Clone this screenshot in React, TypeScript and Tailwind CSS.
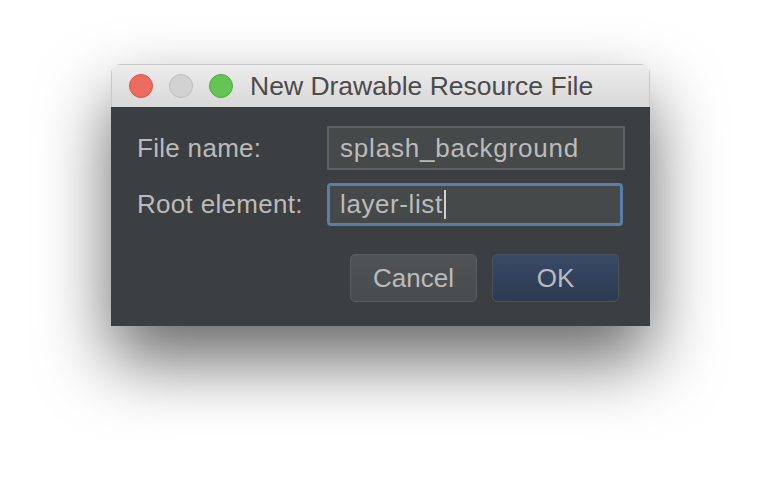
export default function App() {
  return (
    <div className="flex h-[486px] w-[762px] items-start bg-white pl-[111px] pt-[64px] font-['Liberation_Sans',Arial,sans-serif]">
      <div className="w-[539px] overflow-hidden rounded-t-[9px] shadow-[0_34px_70px_rgba(0,0,0,0.6)]">
        <div className="flex h-[43px] items-center gap-[16px] border border-b-0 border-[#c8c8c8] bg-gradient-to-b from-[#ececec] to-[#d8d8d8] pl-[17px]">
          <span className="h-[24px] w-[24px] shrink-0 rounded-full border border-[#d3584f] bg-[#ed6b5f]" />
          <span className="h-[24px] w-[24px] shrink-0 rounded-full border border-[#bcbcbc] bg-[#d2d2d2]" />
          <span className="h-[24px] w-[24px] shrink-0 rounded-full border border-[#54a941] bg-[#62c554]" />
          <span className="ml-[1px] whitespace-nowrap text-[26.5px] leading-none text-[#4b4b4b]">
            New Drawable Resource File
          </span>
        </div>
        <div className="bg-[#3c3f41] pb-[24px] pl-[26px] pr-[25px] pt-[19px] text-[#bbbbbb]">
          <div className="grid grid-cols-[190px_1fr] items-center gap-y-[13px] text-[26px] tracking-[0.3px]">
            <span>File name:</span>
            <div className="flex h-[44px] items-center border-2 border-[#5e6163] bg-[#45494a] pl-[11px] tracking-[0.8px]">
              splash_background
            </div>
            <span>Root element:</span>
            <div className="mr-[2px] flex h-[43px] items-center rounded-[4px] border-[3px] border-[#5a7eab] bg-[#45494a] pl-[10px] tracking-[0.6px]">
              layer-list
              <span className="ml-[1px] h-[29px] w-[2px] bg-[#d0d0d0]" />
            </div>
          </div>
          <div className="mt-[28px] flex justify-end gap-[15px] pr-[6px]">
            <button
              className="h-[48px] w-[127px] rounded-[5px] border border-[#5a5d5f] bg-gradient-to-b from-[#4f5355] to-[#494c4e] text-[26px] text-[#bbbbbb]"
              type="button"
            >
              Cancel
            </button>
            <button
              className="h-[48px] w-[127px] rounded-[5px] border border-[#4a5260] bg-gradient-to-b from-[#384a67] to-[#2d3a51] text-[26px] text-[#bbbbbb]"
              type="button"
            >
              OK
            </button>
          </div>
        </div>
      </div>
    </div>
  );
}
